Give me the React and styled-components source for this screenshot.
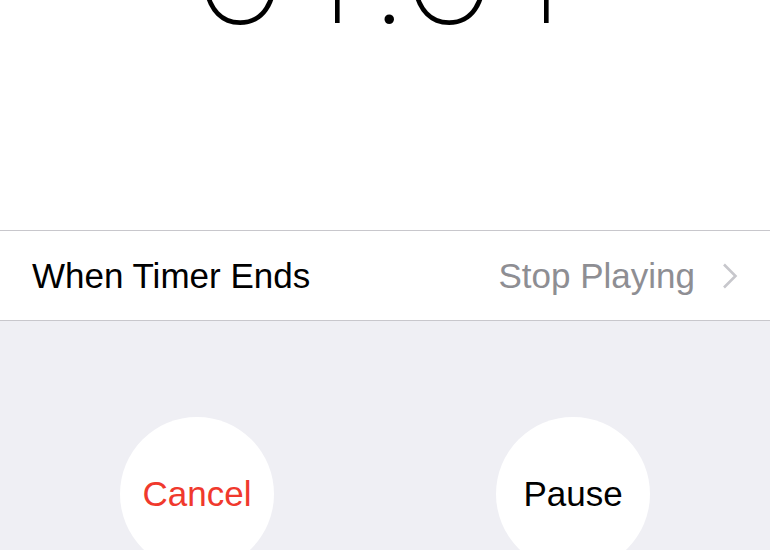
import React from "react";
import styled, { createGlobalStyle } from "styled-components";

const GlobalStyle = createGlobalStyle`
  html, body {
    margin: 0;
    padding: 0;
    background: #efeff4;
  }
  body {
    width: 770px;
    height: 550px;
    overflow: hidden;
    font-family: "Liberation Sans", Arial, sans-serif;
  }
`;

const Screen = styled.div`
  width: 770px;
  height: 550px;
  overflow: hidden;
  display: flex;
  flex-direction: column;
  background: #efeff4;
`;

const ClockArea = styled.div`
  height: 230px;
  flex-shrink: 0;
  background: #ffffff;
  overflow: hidden;
  display: flex;
  justify-content: center;
  align-items: flex-start;
`;

const Digits = styled.div`
  font-family: "Roboto", "Lato", "Inter", sans-serif;
  font-weight: 100;
  font-size: 176px;
  line-height: 1;
  color: #000;
  margin-top: -125px;
  margin-right: -5px;
  letter-spacing: -5px;
`;

const SettingRow = styled.div`
  height: 89px;
  flex-shrink: 0;
  background: #ffffff;
  border-top: 1px solid #c8c7cc;
  border-bottom: 1px solid #c8c7cc;
  display: flex;
  align-items: center;
  justify-content: space-between;
  padding: 0 32px 0 32px;
`;

const Label = styled.span`
  font-size: 35px;
  color: #000;
`;

const Value = styled.span`
  display: flex;
  align-items: center;
  gap: 27px;
  font-size: 35px;
  color: #8e8e93;
`;

const Buttons = styled.div`
  display: flex;
  justify-content: space-between;
  padding: 96px 120px 0 120px;
`;

const CircleButton = styled.button`
  width: 154px;
  height: 154px;
  border-radius: 50%;
  border: none;
  background: #ffffff;
  font-family: "Liberation Sans", Arial, sans-serif;
  font-size: 35px;
  color: ${(p) => (p.$danger ? "#f0392d" : "#000000")};
  padding: 0;
  cursor: pointer;
`;

const Chevron = () => (
  <svg width="16" height="26" viewBox="0 0 16 26">
    <path
      d="M2 1.5 L13.5 13 L2 24.5"
      fill="none"
      stroke="#c7c7cc"
      strokeWidth="2.6"
    />
  </svg>
);

export default function App() {
  return (
    <Screen>
      <GlobalStyle />
      <ClockArea>
        <Digits>01:01</Digits>
      </ClockArea>
      <SettingRow>
        <Label>When Timer Ends</Label>
        <Value>
          Stop Playing
          <Chevron />
        </Value>
      </SettingRow>
      <Buttons>
        <CircleButton $danger>Cancel</CircleButton>
        <CircleButton>Pause</CircleButton>
      </Buttons>
    </Screen>
  );
}
